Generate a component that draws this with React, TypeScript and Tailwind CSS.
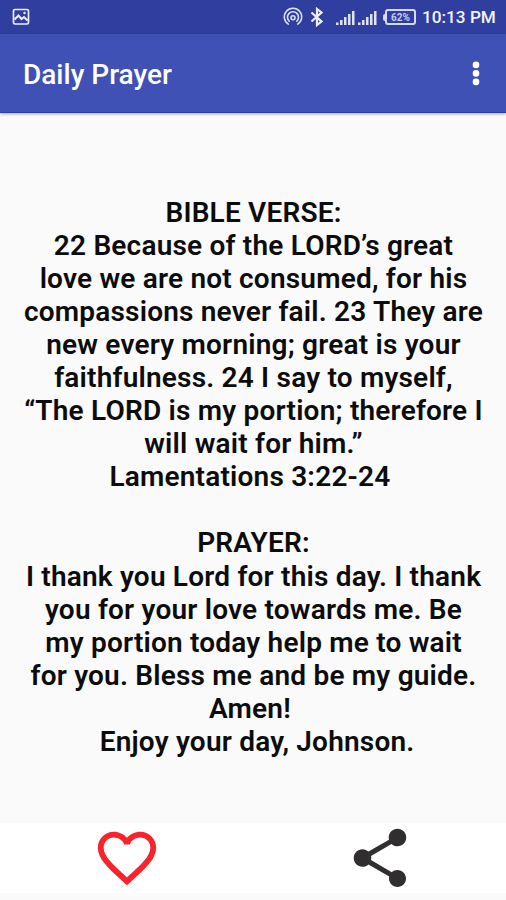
import { MdFavoriteBorder, MdShare } from "react-icons/md";

const lines = [
  "BIBLE VERSE:",
  "22 Because of the LORD’s great",
  "love we are not consumed, for his",
  "compassions never fail. 23 They are",
  "new every morning; great is your",
  "faithfulness. 24 I say to myself,",
  "“The LORD is my portion; therefore I",
  "will wait for him.”",
  "Lamentations 3:22-24 ",
  "",
  "PRAYER:",
  "I thank you Lord for this day. I thank",
  "you for your love towards me. Be",
  "my portion today help me to wait",
  "for you. Bless me and be my guide.",
  "Amen! ",
  " Enjoy your day, Johnson.",
];

const PictureIcon = () => (
  <svg width="18" height="18" viewBox="0 0 18 18" fill="none" stroke="#eceeff">
    <rect x="1.500" y="1.500" width="15" height="14.500" rx="1.500" strokeWidth="1.700" />
    <path d="M2.500 11.500 6.500 7.500 9.500 11l2.500-2 3.500 3.500" strokeWidth="2" />
    <circle cx="12.500" cy="5" r="1.200" fill="#eceeff" stroke="none" />
  </svg>
);

const HotspotIcon = () => (
  <svg width="20" height="20" viewBox="0 0 20 20" fill="none" stroke="#dfe3fa" strokeWidth="1.5" strokeLinecap="round">
    <path d="M5.300 17.200a8.700 8.700 0 1 1 9.400 0" />
    <path d="M6.200 14.200a5.500 5.500 0 1 1 7.600 0" />
    <circle cx="10" cy="10.800" r="2" />
  </svg>
);

const BluetoothIcon = () => (
  <svg width="14" height="20" viewBox="0 0 14 20" fill="none" stroke="#eef0ff" strokeWidth="2.2">
    <path d="m1.500 5.500 10 9L7 18V2l4.500 3.500-10 9" />
  </svg>
);

const SignalIcon = () => (
  <svg width="19" height="16" viewBox="0 0 19 16" fill="#dfe3fa">
    <rect x="0" y="12.500" width="2.500" height="2.500" />
    <rect x="4" y="10" width="2.500" height="5" />
    <rect x="8" y="7" width="2.500" height="8" />
    <rect x="12" y="4" width="2.500" height="11" />
    <rect x="16" y="1" width="2.500" height="14" />
  </svg>
);

const MenuIcon = () => (
  <svg width="34" height="34" viewBox="0 0 34 34" fill="#fff">
    <circle cx="17" cy="8.900" r="3.300" />
    <circle cx="17" cy="17.400" r="3.300" />
    <circle cx="17" cy="25.900" r="3.300" />
  </svg>
);

const App = () => {
  return (
    <div className="flex h-[900px] w-[506px] flex-col overflow-hidden bg-[#fafafa] font-['Roboto',sans-serif]">
      <div className="flex h-[34px] items-center bg-[#303f9f] pl-3 pr-[10px]">
        <PictureIcon />
        <div className="ml-auto flex items-center">
          <HotspotIcon />
          <div className="ml-[7px] flex">
            <BluetoothIcon />
          </div>
          <div className="ml-3 flex gap-[3px] pt-0.5">
            <SignalIcon />
            <SignalIcon />
          </div>
          <div className="ml-[6px] flex items-center">
            <div className="h-[7px] w-[2px] rounded-l-sm bg-[#d5daf8]" />
            <div className="flex h-4 w-[31px] items-center justify-center rounded-[3px] border-2 border-[#d5daf8] text-[10px] font-bold text-[#c5cbf3]">
              62%
            </div>
          </div>
          <div className="ml-[6px] w-[74px] whitespace-nowrap text-[17.200px] font-medium leading-5 text-[#f3f4ff]">
            10:13 PM
          </div>
        </div>
      </div>
      <div className="flex h-[79px] items-center justify-between border-b border-[#303f9f] bg-[#3f51b5] pl-[23px] pr-[13px] text-white shadow-[0_1px_3px_rgba(0,0,0,0.35)]">
        <h1 className="pt-1 text-[28px] font-medium">Daily Prayer</h1>
        <MenuIcon />
      </div>
      <div className="flex-1 pl-px pt-[83px] text-center text-[28px] font-semibold leading-[33.060px] tracking-[0.2px] text-[#0c0c0c]">
        {lines.map((line, i) => (
          <div key={i} className="h-[33.060px] whitespace-pre">
            {line}
          </div>
        ))}
      </div>
      <div className="mb-[7px] grid h-[70px] grid-cols-2 bg-white">
        <div className="flex items-center justify-center text-[#f8232b]">
          <MdFavoriteBorder size={70} />
        </div>
        <div className="flex items-center justify-center text-[#302e2f]">
          <MdShare size={70} />
        </div>
      </div>
    </div>
  );
};

export default App;
